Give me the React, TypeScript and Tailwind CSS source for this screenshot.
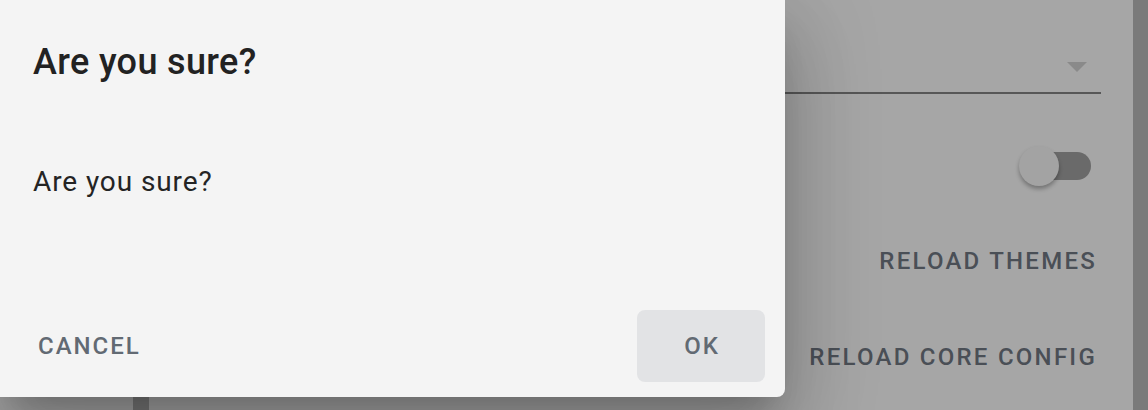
import React from "react";

export default function App() {
  return (
    <div className="relative w-[1148px] h-[410px] overflow-hidden font-['Roboto',sans-serif]">
      {/* Background page (dimmed by scrim) */}
      <div className="flex w-full h-full">
        <div className="w-[133px] h-full bg-[#a6a6a6]" />
        <div className="w-[16px] h-full bg-[#7a7a7a]" />
        <div className="flex-1 h-full bg-[#a6a6a6] flex flex-col items-end pr-[32px]">
          <div className="w-[500px] h-[94px] border-b-2 border-[#575757] flex justify-end items-start pt-[62px] pr-[14px]">
            <div className="w-0 h-0 border-l-[10px] border-r-[10px] border-t-[10px] border-l-transparent border-r-transparent border-t-[#8a8a8a]" />
          </div>
          <div className="mt-[52px] mr-[10px] relative w-[72px] h-[40px]">
            <div className="absolute right-0 top-[6px] w-[60px] h-[28px] rounded-full bg-[#6a6a6a]" />
            <div className="absolute left-0 top-0 w-[40px] h-[40px] rounded-full bg-[#a3a3a3] shadow-[0_3px_4px_rgba(0,0,0,0.3)]" />
          </div>
          <div className="mt-[63px] mr-[4px] h-[24px] leading-[24px] text-[24px] font-medium tracking-[2.25px] text-[#4a4f56]">
            RELOAD THEMES
          </div>
          <div className="mt-[72px] mr-[4px] h-[24px] leading-[24px] text-[24px] font-medium tracking-[2.25px] text-[#4a4f56]">
            RELOAD CORE CONFIG
          </div>
        </div>
        <div className="w-[15px] h-full bg-[#7a7a7a]" />
      </div>

      {/* Dialog */}
      <div className="absolute left-0 top-0 w-[785px] h-[397px] bg-[#f4f4f4] rounded-br-[8px] flex flex-col shadow-[0_22px_30px_-14px_rgba(0,0,0,0.2),0_48px_76px_6px_rgba(0,0,0,0.14),0_18px_92px_16px_rgba(0,0,0,0.12)]">
        <h2 className="pt-[38px] pl-[33px] h-[86px] text-[36px] leading-[48px] font-medium tracking-[0.35px] text-[#222222]">
          Are you sure?
        </h2>
        <p className="mt-[76px] pl-[33px] text-[28px] leading-[40px] tracking-[0.9px] text-[#242424]">
          Are you sure?
        </p>
        <div className="mt-auto mb-[15px] flex items-center justify-between pl-[22px] pr-[20px]">
          <button className="h-[72px] px-[16px] rounded-[8px] text-[24px] font-medium tracking-[2px] text-[#626a73]">
            CANCEL
          </button>
          <button className="h-[72px] w-[128px] rounded-[8px] bg-[#e2e3e5] text-[24px] font-medium tracking-[2px] text-[#626a73] flex items-center justify-center pl-[2px]">
            OK
          </button>
        </div>
      </div>
    </div>
  );
}
